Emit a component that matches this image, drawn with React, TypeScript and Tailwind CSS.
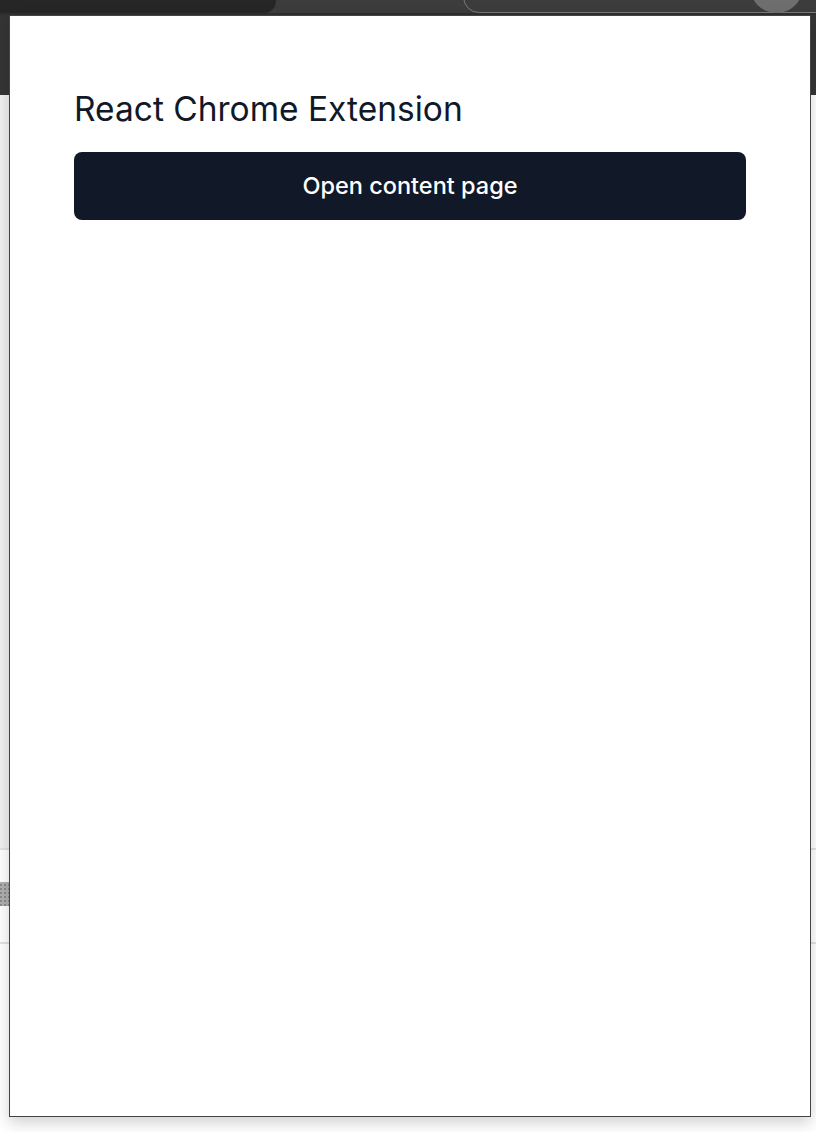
import React from 'react';

export default function App() {
  return (
    <div className="relative w-[816px] h-[1132px] overflow-hidden bg-white font-['Inter','Noto_Sans',sans-serif]">
      {/* browser behind the popup */}
      <div className="h-[95px] bg-[#353535] flex flex-col">
        <div className="relative h-[13px] bg-[#3c3c3c]">
          <div className="absolute left-0 top-0 h-[13px] w-[276px] rounded-br-[12px] bg-[#262626]" />
          <div className="absolute left-[463px] top-[-20px] h-[33px] w-[400px] rounded-[16px] border border-[#7a7a7a] bg-[#3c3c3c]" />
          <div className="absolute left-[750px] top-[-40px] h-[53px] w-[53px] rounded-full bg-[#6e6e6e]" />
        </div>
        <div className="h-[2px] bg-[#2f2f2f]" />
      </div>
      <div className="h-[753px] bg-gradient-to-r from-[#f0f0f0] to-white" />
      <div className="flex flex-col">
        <div className="h-[2px] bg-[#e2e2e2]" />
        <div className="h-[32px]" />
        <div className="h-[24px] flex">
          <div className="w-[10px] bg-[#8a8a8a] bg-[linear-gradient(90deg,transparent_60%,#b0b0b0_60%),linear-gradient(0deg,transparent_60%,#b0b0b0_60%)] bg-[length:4px_4px]" />
        </div>
        <div className="h-[36px]" />
        <div className="h-[2px] bg-[#e2e2e2]" />
      </div>

      {/* extension popup */}
      <div className="absolute left-[9px] top-[15px] w-[802px] h-[1102px] border border-[#444444] bg-white shadow-[0_6px_14px_rgba(0,0,0,0.18)]">
        <div className="px-[64px] pt-[73px]">
          <h1 className="text-[33.5px] leading-[40px] text-[#111827] font-normal">React Chrome Extension</h1>
          <button className="mt-[23px] w-full h-[68px] rounded-lg bg-[#111827] text-white text-[23.5px] font-medium">
            Open content page
          </button>
        </div>
      </div>
    </div>
  );
}
